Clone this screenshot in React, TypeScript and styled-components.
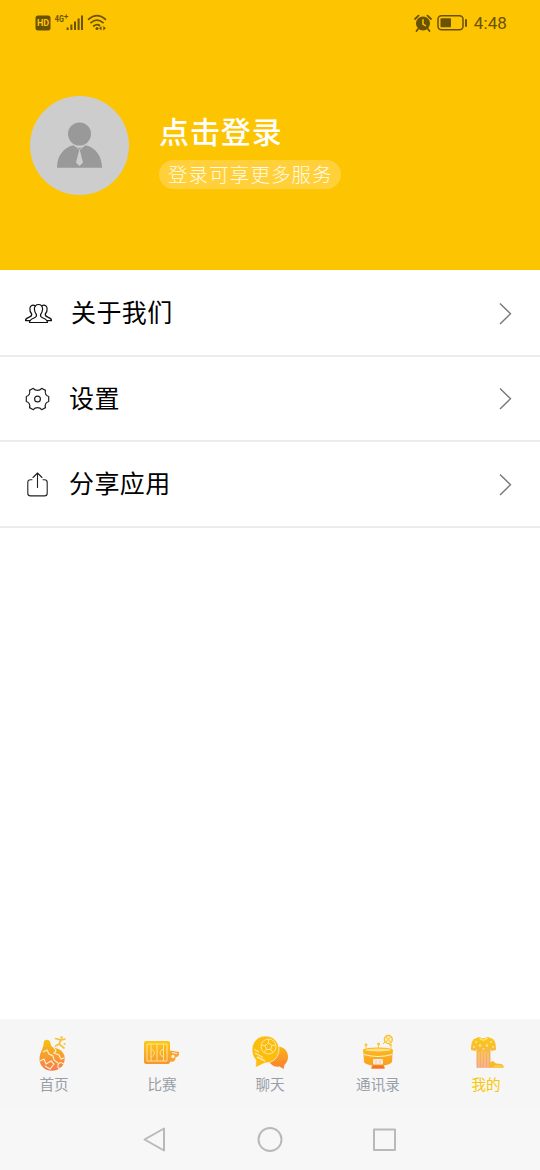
import React from "react";
import styled, { createGlobalStyle } from "styled-components";

const GlobalStyle = createGlobalStyle`
    * {
        box-sizing: border-box;
    }

    body {
        margin: 0;
        background: #fff;
        font-family: "Noto Sans CJK SC", "Noto Sans", sans-serif;
    }

    svg {
        display: block;
        flex: none;
    }
`;

const Page = styled.div`
    width: 100%;
    height: 1170px;
    display: flex;
    flex-direction: column;
    overflow: hidden;
`;

const Header = styled.header`
    height: 270px;
    flex: none;
    background: #fdc402;
`;

const StatusBar = styled.div`
    height: 46px;
    padding: 0 33px 0 35px;
    display: flex;
    align-items: center;
    justify-content: space-between;
`;

const StatusGroup = styled.div`
    display: flex;
    align-items: center;
    gap: 5px;
`;

const Clock = styled.span`
    margin-left: 1px;
    color: #6a5205;
    font-family: Roboto, "Liberation Sans", sans-serif;
    font-size: 17px;
    line-height: 20px;
    letter-spacing: 0.1px;
`;

const Profile = styled.div`
    display: flex;
    padding: 50px 30px 0;
    gap: 30px;
`;

const ProfileText = styled.div`
    display: flex;
    flex-direction: column;
    align-items: flex-start;
    padding-top: 14px;
`;

const LoginTitle = styled.div`
    color: #fff;
    font-size: 30px;
    font-weight: 500;
    line-height: 40px;
    letter-spacing: 0.9px;
`;

const LoginHint = styled.div`
    height: 29px;
    margin-top: 10px;
    padding: 0 8px 0 9px;
    border-radius: 15px;
    background: #ffd03a;
    color: #fffbe8;
    font-size: 19.5px;
    font-weight: 300;
    line-height: 28px;
    letter-spacing: 1.1px;
    white-space: nowrap;
`;

const Menu = styled.main`
    flex: 1;
    padding-top: 1px;
    background: #fff;
`;

const MenuRow = styled.div`
    height: 85.5px;
    display: flex;
    align-items: center;
    padding: 2px 27px 0 24px;
    border-bottom: 2px solid #ebebeb;
`;

const MenuLabel = styled.span<{ $gap: number }>`
    flex: 1;
    margin-left: ${(props) => props.$gap}px;
    padding-bottom: 5px;
    color: #000;
    font-size: 25px;
    line-height: 36px;
    letter-spacing: 0.4px;
`;

const TabBar = styled.nav`
    height: 91px;
    flex: none;
    display: flex;
    background: #f6f6f6;
`;

const Tab = styled.div<{ $active?: boolean }>`
    flex: 1;
    display: flex;
    flex-direction: column;
    align-items: center;
    padding-top: 13px;
    color: ${(props) => (props.$active ? "#f8c808" : "#999fa8")};
    font-size: 14.6px;
    line-height: 22px;
`;

const TabLabel = styled.span`
    margin-top: 1px;
`;

const SystemBar = styled.div`
    height: 60px;
    flex: none;
    display: flex;
    align-items: center;
    justify-content: space-between;
    padding: 0 142px;
    background: #f7f7f7;
`;

const STATUS = "#6a5205";

const NetworkIcons = () => (
    <svg width="74" height="20" viewBox="35 13 74 20">
        <rect x="35.5" y="15.5" width="15" height="15" rx="2.5" fill={STATUS} />
        <text x="43" y="26.4" textAnchor="middle" fontFamily="Roboto" fontSize="9" fontWeight="700" fill="#fdc402">HD</text>
        <text x="54.8" y="22" fontFamily="Roboto" fontSize="9.5" fontWeight="700" fill={STATUS} textLength="9" lengthAdjust="spacingAndGlyphs">4G</text>
        <path d="M66.200 14.500V18.500M64.200 16.500H68.200" stroke={STATUS} strokeWidth="1.1" />
        <g stroke={STATUS} strokeWidth="2">
            <path d="M67.6 27.5V30M71.4 24.5V30M75 21.5V30M78.6 18.5V30M82 15.5V30" />
        </g>
        <g fill="none" stroke={STATUS} strokeWidth="1.7" strokeLinecap="round">
            <path d="M88.5 19.3Q97 12 105.500 19.300M91 22.700Q97 17.600 103 22.700M93.700 26Q97 23.300 99.500 25.500" />
        </g>
        <circle cx="97" cy="28.600" r="1.500" fill={STATUS} />
        <path d="M101.500 26L99 28.300L101.500 30.600ZM103.300 26L105.800 28.300L103.300 30.600Z" fill={STATUS} />
    </svg>
);

const AlarmIcon = () => (
    <svg width="18" height="18" viewBox="0 0 18 18">
        <circle cx="9" cy="9.5" r="7" fill={STATUS} />
        <path d="M1 5L4.500 1.700M17 5L13.500 1.700M4 15L2.500 17M14 15L15.500 17" stroke={STATUS} strokeWidth="1.8" strokeLinecap="round" />
        <path d="M9 5.300V10L12 12" fill="none" stroke="#fdc402" strokeWidth="1.5" />
    </svg>
);

const BatteryIcon = () => (
    <svg width="31" height="18" viewBox="0 0 31 18">
        <rect x="1" y="1.800" width="25" height="14" rx="3.500" fill="none" stroke={STATUS} strokeWidth="1.5" />
        <rect x="3.500" y="4.300" width="10.500" height="9" rx="1" fill={STATUS} />
        <path d="M29 6V12" stroke={STATUS} strokeWidth="2" strokeLinecap="round" />
    </svg>
);

const Avatar = () => (
    <svg width="99" height="99" viewBox="0 0 99 99">
        <circle cx="49.500" cy="49.500" r="49.500" fill="#cdcdcd" />
        <circle cx="49.500" cy="38" r="11.500" fill="#999" />
        <path d="M27 71.700C27 60 33.500 51.500 43.500 49.300Q49.500 54.500 55.500 49.300C65.500 51.500 72 60 72 71.700Z" fill="#999" />
        <path d="M49.500 53L53 66.500L49.500 70L46 66.500Z" fill="#cdcdcd" />
        <path d="M44.500 49.300L49.500 54L54.500 49.300" fill="none" stroke="#cdcdcd" strokeWidth="0.8" />
    </svg>
);

const PeopleIcon = () => (
    <svg width="29" height="26" viewBox="0 0 29 26" fill="none" stroke="#111" strokeWidth="1.2" strokeLinejoin="round" strokeLinecap="round">
        <path d="M14.500 3.500C11.900 3.500 10.300 5.400 10.400 8C10.500 10.300 11.100 12.100 12.400 13.500C12.900 15.400 12 16.300 10 17C7.500 18 5.600 18.800 5.500 21.500H23.500C23.400 18.800 21.500 18 19 17C17 16.300 16.100 15.400 16.600 13.500C17.900 12.100 18.500 10.300 18.600 8C18.700 5.400 17.100 3.500 14.500 3.500Z" />
        <path d="M11 4.800C9.500 3.700 6.300 4.100 5.900 7.300C5.700 9.400 6.400 11.700 7.700 13C8 15 6.800 15.700 4.700 16.400C2.700 17.100 1.500 17.800 1.500 19.600H5.700" />
        <path d="M18 4.800C19.500 3.700 22.700 4.100 23.100 7.300C23.300 9.400 22.600 11.700 21.300 13C21 15 22.200 15.700 24.300 16.400C26.300 17.100 27.500 17.800 27.500 19.600H23.300" />
    </svg>
);

const GearIcon = () => (
    <svg width="27" height="26" viewBox="0 0 27 26" fill="none" stroke="#222" strokeWidth="1.2" strokeLinejoin="round">
        <path d="M9.300 2.300Q10.800 4.300 13.500 4.300T17.700 2.300L21.500 4.400Q20.800 6.500 21.700 8.200T24.700 10.500V15.500Q22.600 16.100 21.700 17.800T21.500 21.600L17.700 23.700Q16.200 21.700 13.500 21.700T9.300 23.700L5.500 21.600Q6.200 19.500 5.300 17.800T2.300 15.500V10.500Q4.400 9.900 5.300 8.200T5.500 4.400Z" />
        <circle cx="13.500" cy="13" r="2.900" />
    </svg>
);

const ShareIcon = () => (
    <svg width="27" height="26" viewBox="0 0 27 26" fill="none" stroke="#222" strokeWidth="1.1" strokeLinecap="round" strokeLinejoin="round">
        <path d="M8 7.800H6.500Q3.800 7.800 3.800 10.500V21.200Q3.800 23.900 6.500 23.900H20.500Q23.200 23.900 23.200 21.200V10.500Q23.200 7.800 20.500 7.800H19" />
        <path d="M13.500 15.500V1M9 5.500L13.500 1L18 5.500" />
    </svg>
);

const Chevron = () => (
    <svg width="14" height="24" viewBox="0 0 14 24" fill="none" stroke="#777" strokeWidth="1.4">
        <path d="M1 1.500L11.500 11.700L1 21.900" />
    </svg>
);

// one gradient per tab icon, yellow on top and orange below
const Gradient = ({ id, from = "#fbc912", to = "#f98a35" }: { id: string; from?: string; to?: string }) => (
    <defs>
        <linearGradient id={id} x1="0" y1="4" x2="0" y2="37" gradientUnits="userSpaceOnUse">
            <stop offset="0.15" stopColor={from} />
            <stop offset="1" stopColor={to} />
        </linearGradient>
    </defs>
);

const HomeIcon = () => (
    <svg width="40" height="40" viewBox="0 0 40 40">
        <Gradient id="home" from="#f6bf10" to="#f6804a" />
        <path d="M9.700 11C9.500 7 15.500 6.500 16.300 10.500L17.500 14.500L23 16.500L26.500 18C30 21 31 24 30.600 28C30 34.500 24.500 38.800 18 38.800C11 38.800 5.500 34 5.500 27C5.500 20.500 9.500 17 9.700 11Z" fill="url(#home)" />
        <path d="M9 20L13 18L15 22L19 24L20 28L24 31M19 14L22 19L20 21L25 23L27 27L30 26M6 29L10 27L12 32L17 29L20 32L16 37L11 34M30 32Q25 29 24 33T27 36" fill="none" stroke="#fff0d2" strokeWidth="1.1" />
        <path d="M21.500 6.500L27 8L31 7M27 8L25 12L30 16M25 12L21.500 14" fill="none" stroke="#f5c43d" strokeWidth="1.7" strokeLinecap="round" />
        <circle cx="27.500" cy="5.500" r="1.300" fill="#f5c43d" />
        <circle cx="30.500" cy="12" r="1" fill="#f5c43d" />
    </svg>
);

const MatchIcon = () => (
    <svg width="40" height="40" viewBox="0 0 40 40">
        <Gradient id="match" />
        <rect x="2" y="9" width="26" height="23" rx="2" fill="url(#match)" />
        <g fill="none" stroke="#ffe39a" strokeWidth="1">
            <path d="M5 12H25V29H5ZM15 12V29M9 12V29M21.500 12V29" />
            <path d="M9 17.500C13.500 17.500 13.500 24.500 9 24.500M21.500 17.500C17 17.500 17 24.500 21.500 24.500" />
        </g>
        <path d="M28 18.500L37.300 20L36.500 24L33.500 25.500C33.500 29.500 31 30.500 28 29.500Z" fill="#fba234" />
        <circle cx="31" cy="24.500" r="1.700" fill="#fff2d6" />
        <path d="M30 20.500L35 21.500" stroke="#fff2d6" />
    </svg>
);

const ChatIcon = () => (
    <svg width="40" height="40" viewBox="0 0 40 40">
        <Gradient id="chat" from="#fdc20d" to="#fb7e32" />
        <path d="M27 14.500C34 14.500 38 19 38 25C38 28.500 36.500 31 34.500 32.800L33.500 37L29.500 34.500C23 35.500 18 31 18 25Z" fill="url(#chat)" />
        <path d="M15 4C23 3.500 29 9.500 29 17.500C29 25.500 23 31 15 31L5.500 35.500L6 28C3.500 25.500 2 22 2 18C2 10 7.500 4.300 15 4Z" fill="#fdbd0d" stroke="#f6f6f6" strokeWidth="0.7" />
        <g fill="none" stroke="#ffe7a0" strokeWidth="1">
            <circle cx="18.500" cy="14.500" r="7.500" />
            <path d="M18.500 11L22 13.500L20.700 17.500H16.300L15 13.500ZM18.500 7V11M26 13L22 13.500M23 20.500L20.700 17.500M14 20.500L16.300 17.500M11 13L15 13.500" />
            <path d="M4.500 17.500L9 20M5 21L13 25.500M7 25L15 29" strokeWidth="1.4" />
        </g>
    </svg>
);

const StadiumIcon = () => (
    <svg width="40" height="40" viewBox="0 0 40 40">
        <Gradient id="stadium" from="#fbc31e" to="#fb9a22" />
        <path d="M5 18C5 14.500 35 14.500 35 18L34.500 22L34 30Q33 32 26 33.500L27 36.500H13L14 33.500Q7 32 6 30L5.500 22Z" fill="url(#stadium)" />
        <ellipse cx="20" cy="18" rx="13" ry="1.500" fill="#ffe28a" />
        <path d="M6 22.500Q20 26.500 34 22.500" fill="none" stroke="#fff1c8" strokeWidth="1.200" />
        <rect x="15" y="27" width="10" height="5.500" rx="1" fill="#f8ebd9" />
        <path d="M18 28V32M22 28V32" stroke="#dfc9b4" strokeWidth="0.8" />
        <path d="M15 33.500H25L26.500 36.500H13.500Z" fill="#f9702b" />
        <path d="M8 17V13M20.500 16V12M33 17V13" stroke="#f9c83c" strokeWidth="1" />
        <circle cx="8" cy="12.800" r="1.500" fill="#f9c83c" />
        <circle cx="20.500" cy="12" r="1.500" fill="#f9c83c" />
        <circle cx="32.500" cy="12.800" r="1.300" fill="#f9c83c" />
        <circle cx="30.300" cy="7.500" r="4" fill="#fff1bf" stroke="#f8c12f" strokeWidth="1.300" />
        <path d="M28 5L32.500 10M32.500 5L28 10M25 12L27 10" stroke="#f8c12f" strokeWidth="1" />
    </svg>
);

const MineIcon = () => (
    <svg width="40" height="40" viewBox="0 0 40 40">
        <Gradient id="mine" from="#f9c51c" to="#f3a184" />
        <path d="M13 5L17.500 6.500L22 5L27 7Q30 9 30 18L25.500 19L24.500 17V35.700H10.500V17L9.500 19L5 18Q5 9 8 7Z" fill="url(#mine)" />
        <path d="M13 20V35M16 19V35M19 19V35M22 20V35" stroke="#fbd0a0" strokeWidth="0.8" />
        <path d="M13.500 6Q17.500 10.500 21.500 6" fill="none" stroke="#ffe48c" strokeWidth="1.200" />
        <g fill="#ffe387">
            <circle cx="10" cy="10" r="1.100" />
            <circle cx="8" cy="15" r="1.100" />
            <circle cx="14" cy="13.500" r="1.300" />
            <circle cx="21" cy="13.500" r="1.300" />
            <circle cx="25" cy="10" r="1.100" />
            <circle cx="27" cy="15" r="1.100" />
            <circle cx="17.500" cy="17" r="1" />
        </g>
        <path d="M24.500 30L27 29L30 31.500L35.500 32Q38 33 37.700 35.700H23Z" fill="#f8bb22" />
        <path d="M28 34H36" stroke="#ffe29b" strokeWidth="0.800" />
    </svg>
);

const menu = [
    { label: "关于我们", icon: <PeopleIcon />, gap: 18 },
    { label: "设置", icon: <GearIcon />, gap: 18 },
    { label: "分享应用", icon: <ShareIcon />, gap: 18 },
];

const tabs = [
    { label: "首页", icon: <HomeIcon /> },
    { label: "比赛", icon: <MatchIcon /> },
    { label: "聊天", icon: <ChatIcon /> },
    { label: "通讯录", icon: <StadiumIcon /> },
    { label: "我的", icon: <MineIcon />, active: true },
];

const App: React.FC = () => {
    return (
        <Page>
            <GlobalStyle />
            <Header>
                <StatusBar>
                    <NetworkIcons />
                    <StatusGroup>
                        <AlarmIcon />
                        <BatteryIcon />
                        <Clock>4:48</Clock>
                    </StatusGroup>
                </StatusBar>
                <Profile>
                    <Avatar />
                    <ProfileText>
                        <LoginTitle>点击登录</LoginTitle>
                        <LoginHint>登录可享更多服务</LoginHint>
                    </ProfileText>
                </Profile>
            </Header>
            <Menu>
                {menu.map((item) => (
                    <MenuRow key={item.label}>
                        {item.icon}
                        <MenuLabel $gap={item.gap}>{item.label}</MenuLabel>
                        <Chevron />
                    </MenuRow>
                ))}
            </Menu>
            <TabBar>
                {tabs.map((tab) => (
                    <Tab key={tab.label} $active={tab.active}>
                        {tab.icon}
                        <TabLabel>{tab.label}</TabLabel>
                    </Tab>
                ))}
            </TabBar>
            <SystemBar>
                <svg width="26" height="28" viewBox="0 0 26 28" fill="none" stroke="#b9b9b9" strokeWidth="2" strokeLinejoin="round">
                    <path d="M2.500 13.500L22 2.500V24.500Z" />
                </svg>
                <svg width="28" height="28" viewBox="0 0 28 28" fill="none" stroke="#b9b9b9" strokeWidth="2">
                    <circle cx="14" cy="13.500" r="11.500" />
                </svg>
                <svg width="26" height="28" viewBox="0 0 26 28" fill="none" stroke="#b9b9b9" strokeWidth="2" strokeLinejoin="round">
                    <rect x="2" y="3.500" width="21" height="20.500" />
                </svg>
            </SystemBar>
        </Page>
    );
};

export default App;
